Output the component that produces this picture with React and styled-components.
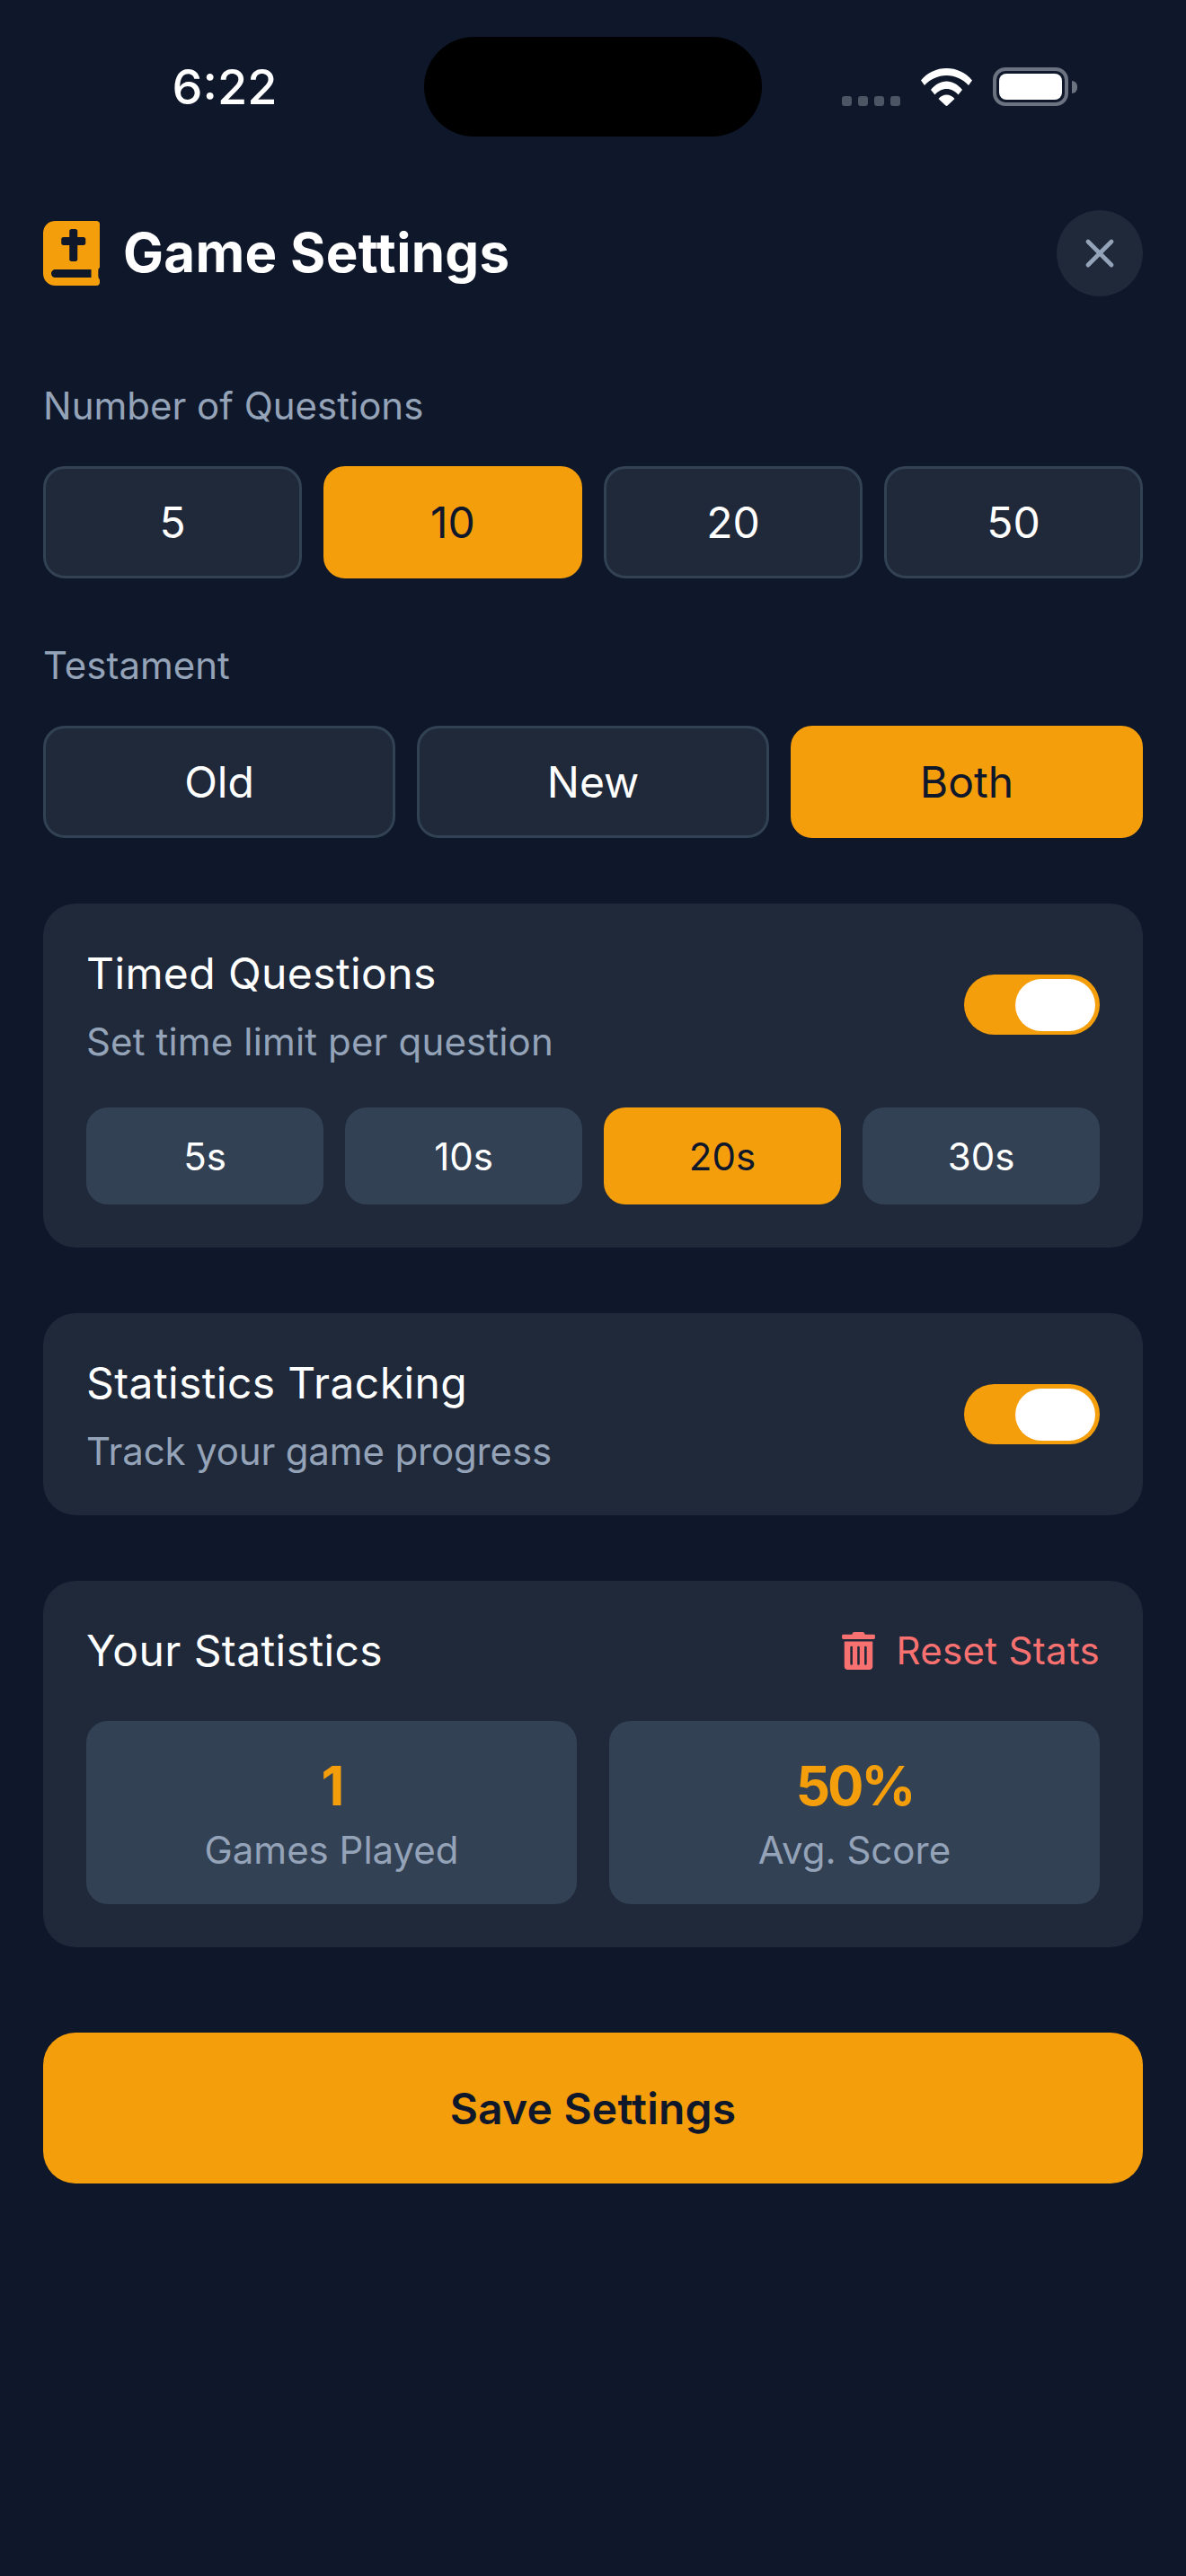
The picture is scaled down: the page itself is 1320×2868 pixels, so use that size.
import React from 'react'
import styled, { createGlobalStyle } from 'styled-components'
import { FaBible, FaTrashAlt } from 'react-icons/fa'
import { X } from 'lucide-react'

const GlobalStyle = createGlobalStyle`
  * {
    box-sizing: border-box;
  }

  html,
  body {
    margin: 0;
    padding: 0;
    background: #0f172a;
  }

  body {
    font-family: 'Inter', sans-serif;
    color: #fff;
  }
`

const Page = styled.div`
  width: 1320px;
  height: 2868px;
  overflow: hidden;
  background: #0f172a;
`

const StatusBar = styled.div`
  display: grid;
  grid-template-columns: 472px 376px 1fr;
  height: 152px;
  padding-top: 41px;
`

const Clock = styled.div`
  display: flex;
  justify-content: center;
  align-items: center;
  height: 111px;
  padding-left: 28px;
  font-size: 54px;
  font-weight: 500;
  line-height: 1;
`

const Island = styled.div`
  height: 111px;
  border-radius: 56px;
  background: #000;
`

const StatusIcons = styled.div`
  display: flex;
  align-items: flex-end;
  height: 77px;
  padding-left: 89px;
`

const SignalDots = styled.div`
  display: flex;
  gap: 7px;
  margin-right: 23px;
`

const Dot = styled.span`
  width: 11px;
  height: 11px;
  border-radius: 3px;
  background: #4b5563;
`

const Battery = styled.div`
  display: flex;
  align-items: center;
  margin-left: 23px;
`

const BatteryBody = styled.div`
  width: 84px;
  height: 43px;
  padding: 3px;
  border: 4px solid #6b7280;
  border-radius: 14px;
`

const BatteryFill = styled.div`
  width: 100%;
  height: 100%;
  border-radius: 8px;
  background: #fff;
`

const BatteryCap = styled.div`
  width: 6px;
  height: 14px;
  margin-left: 4px;
  border-radius: 0 7px 7px 0;
  background: #6b7280;
`

const Content = styled.div`
  display: flex;
  flex-direction: column;
  padding: 0 48px;
`

const Header = styled.div`
  display: flex;
  justify-content: space-between;
  align-items: center;
  height: 96px;
  margin-top: 82px;
  margin-bottom: 92px;
`

const TitleGroup = styled.div`
  display: flex;
  align-items: center;
  gap: 26px;
  color: #f59e0b;
  font-size: 72px;

  svg {
    display: block;
    width: 63px;
  }
`

const Title = styled.h1`
  margin: 0 0 2px;
  color: #fff;
  font-size: 60px;
  font-weight: 700;
  line-height: 84px;
  letter-spacing: 0.3px;
`

const CloseButton = styled.button`
  display: flex;
  justify-content: center;
  align-items: center;
  width: 96px;
  height: 96px;
  padding: 0;
  border: 0;
  border-radius: 50%;
  background: #1f293a;
  color: #94a3b8;
`

const Label = styled.div`
  margin-bottom: 37px;
  color: #94a3b8;
  font-size: 42px;
  line-height: 60px;
`

const OptionRow = styled.div`
  display: grid;
  grid-template-columns: repeat(${(p) => p.$cols}, 1fr);
  gap: 24px;
  margin-bottom: ${(p) => p.$mb || 0}px;
`

const OptionButton = styled.button`
  height: 125px;
  padding: 0;
  border: 3px solid ${(p) => (p.$active ? '#f59e0b' : '#334155')};
  border-radius: 24px;
  background: ${(p) => (p.$active ? '#f59e0b' : '#1f293a')};
  color: ${(p) => (p.$active ? '#0f172a' : '#fff')};
  font-family: inherit;
  font-size: 48px;
  font-weight: 400;
`

const Card = styled.section`
  margin-top: 73px;
  padding: 48px;
  border-radius: 36px;
  background: #1f293a;
`

const ToggleRow = styled.div`
  display: flex;
  justify-content: space-between;
  align-items: center;
`

const CardTitle = styled.div`
  color: #fff;
  font-size: 48px;
  font-weight: 400;
  line-height: 60px;
  letter-spacing: 0.4px;
`

const CardHint = styled.div`
  margin-top: 22px;
  color: #94a3b8;
  font-size: 42px;
  line-height: 47px;
  letter-spacing: ${(p) => p.$tracking || 0}px;
`

const Toggle = styled.div`
  display: flex;
  justify-content: flex-end;
  align-items: center;
  width: 151px;
  height: 67px;
  padding-right: 5px;
  border-radius: 34px;
  background: #f59e0b;
`

const Knob = styled.div`
  width: 89px;
  height: 58px;
  border-radius: 29px;
  background: #fff;
`

const TimeRow = styled.div`
  display: grid;
  grid-template-columns: repeat(4, 1fr);
  gap: 24px;
  margin-top: 50px;
`

const TimeButton = styled.button`
  height: 108px;
  padding: 0;
  border: 0;
  border-radius: 24px;
  background: ${(p) => (p.$active ? '#f59e0b' : '#334155')};
  color: ${(p) => (p.$active ? '#0f172a' : '#fff')};
  font-family: inherit;
  font-size: 42px;
  font-weight: 400;
`

const StatsHeader = styled.div`
  display: flex;
  justify-content: space-between;
  align-items: center;
  margin-bottom: 48px;
`

const ResetButton = styled.button`
  display: flex;
  align-items: center;
  gap: 24px;
  padding: 0;
  border: 0;
  background: none;
  color: #f87171;
  font-family: inherit;
  font-size: 42px;
  line-height: 60px;
  letter-spacing: 0.3px;

  svg {
    display: block;
    width: 37px;
  }
`

const StatsGrid = styled.div`
  display: grid;
  grid-template-columns: 1fr 1fr;
  gap: 36px;
`

const StatBox = styled.div`
  height: 204px;
  padding: 30px 36px 0;
  border-radius: 24px;
  background: #334155;
  text-align: center;
`

const StatValue = styled.div`
  color: #f59e0b;
  font-size: 60px;
  font-weight: 700;
  line-height: 84px;
  letter-spacing: -3px;
`

const StatLabel = styled.div`
  color: #94a3b8;
  font-size: 42px;
  line-height: 60px;
`

const SaveButton = styled.button`
  height: 168px;
  margin-top: 95px;
  padding: 0;
  border: 0;
  border-radius: 36px;
  background: #f59e0b;
  color: #0f172a;
  font-family: inherit;
  font-size: 48px;
  font-weight: 600;
  letter-spacing: 0.2px;
`

const questionCounts = [
  { label: '5' },
  { label: '10', active: true },
  { label: '20' },
  { label: '50' },
]

const testaments = [
  { label: 'Old' },
  { label: 'New' },
  { label: 'Both', active: true },
]

const timeLimits = [
  { label: '5s' },
  { label: '10s' },
  { label: '20s', active: true },
  { label: '30s' },
]

const stats = [
  { value: '1', label: 'Games Played' },
  { value: '50%', label: 'Avg. Score' },
]

const WifiIcon = () => (
  <svg width="57" height="42" viewBox="0 0 57 42" fill="#fff">
    <path d="M0 13.500C7.500 4.500 17.500 0 28.500 0S49.500 4.500 57 13.500L53 19C46.500 12 38 8 28.500 8S10.500 12 4 19Z" />
    <path d="M11 24C16 18 22 14.500 28.500 14.500S41 18 46 24L41.500 29.500C38 25.500 33.500 23 28.500 23S19 25.500 15.500 29.500Z" />
    <path d="M19.500 34C22 31 25 29.500 28.500 29.500S35 31 37.500 34L29.500 41.500A1.500 1.500 0 0 1 27.500 41.500Z" />
  </svg>
)

const App = () => (
  <Page>
    <GlobalStyle />
    <StatusBar>
      <Clock>6:22</Clock>
      <Island />
      <StatusIcons>
        <SignalDots>
          <Dot />
          <Dot />
          <Dot />
          <Dot />
        </SignalDots>
        <WifiIcon />
        <Battery>
          <BatteryBody>
            <BatteryFill />
          </BatteryBody>
          <BatteryCap />
        </Battery>
      </StatusIcons>
    </StatusBar>

    <Content>
      <Header>
        <TitleGroup>
          <FaBible />
          <Title>Game Settings</Title>
        </TitleGroup>
        <CloseButton aria-label="Close">
          <X size={52} strokeWidth={2.2} />
        </CloseButton>
      </Header>

      <Label>Number of Questions</Label>
      <OptionRow $cols={4} $mb={67}>
        {questionCounts.map((o) => (
          <OptionButton key={o.label} $active={o.active}>
            {o.label}
          </OptionButton>
        ))}
      </OptionRow>

      <Label>Testament</Label>
      <OptionRow $cols={3}>
        {testaments.map((o) => (
          <OptionButton key={o.label} $active={o.active}>
            {o.label}
          </OptionButton>
        ))}
      </OptionRow>

      <Card>
        <ToggleRow>
          <div>
            <CardTitle>Timed Questions</CardTitle>
            <CardHint $tracking={0.15}>Set time limit per question</CardHint>
          </div>
          <Toggle>
            <Knob />
          </Toggle>
        </ToggleRow>
        <TimeRow>
          {timeLimits.map((o) => (
            <TimeButton key={o.label} $active={o.active}>
              {o.label}
            </TimeButton>
          ))}
        </TimeRow>
      </Card>

      <Card>
        <ToggleRow>
          <div>
            <CardTitle>Statistics Tracking</CardTitle>
            <CardHint $tracking={-0.15}>Track your game progress</CardHint>
          </div>
          <Toggle>
            <Knob />
          </Toggle>
        </ToggleRow>
      </Card>

      <Card>
        <StatsHeader>
          <CardTitle>Your Statistics</CardTitle>
          <ResetButton>
            <FaTrashAlt />
            Reset Stats
          </ResetButton>
        </StatsHeader>
        <StatsGrid>
          {stats.map((s) => (
            <StatBox key={s.label}>
              <StatValue>{s.value}</StatValue>
              <StatLabel>{s.label}</StatLabel>
            </StatBox>
          ))}
        </StatsGrid>
      </Card>

      <SaveButton>Save Settings</SaveButton>
    </Content>
  </Page>
)

export default App
